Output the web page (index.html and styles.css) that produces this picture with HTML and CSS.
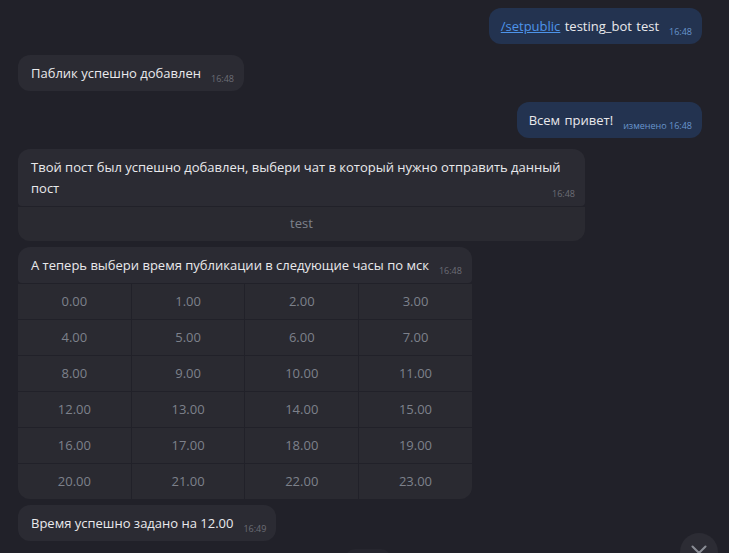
FILE: index.html
```html
<!DOCTYPE html>
<html lang="ru">
<head>
<meta charset="utf-8">
<link rel="stylesheet" href="styles.css">
</head>
<body>
<div class="chat">
  <div class="row out first">
    <div class="bubble out-b"><a class="link" href="#">/setpublic</a> testing_bot test<span class="time">16:48</span></div>
  </div>
  <div class="row in">
    <div class="bubble">Паблик успешно добавлен<span class="time">16:48</span></div>
  </div>
  <div class="row out">
    <div class="bubble out-b">Всем привет!<span class="time">изменено 16:48</span></div>
  </div>
  <div class="row in">
    <div class="group wide">
      <div class="bubble top">Твой пост был успешно добавлен, выбери чат в который нужно отправить данный пост<span class="time">16:48</span></div>
      <div class="kb kb1">
        <div class="key">test</div>
      </div>
    </div>
  </div>
  <div class="row in same">
    <div class="group">
      <div class="bubble top">А теперь выбери время публикации в следующие часы по мск<span class="time">16:48</span></div>
      <div class="kb kb4">
        <div class="key">0.00</div><div class="key">1.00</div><div class="key">2.00</div><div class="key">3.00</div>
        <div class="key">4.00</div><div class="key">5.00</div><div class="key">6.00</div><div class="key">7.00</div>
        <div class="key">8.00</div><div class="key">9.00</div><div class="key">10.00</div><div class="key">11.00</div>
        <div class="key">12.00</div><div class="key">13.00</div><div class="key">14.00</div><div class="key">15.00</div>
        <div class="key">16.00</div><div class="key">17.00</div><div class="key">18.00</div><div class="key">19.00</div>
        <div class="key">20.00</div><div class="key">21.00</div><div class="key">22.00</div><div class="key">23.00</div>
      </div>
    </div>
  </div>
  <div class="row in same">
    <div class="bubble">Время успешно задано на 12.00<span class="time">16:49</span></div>
  </div>
</div>
<div class="pill"></div>
<button class="down" aria-label="down">
  <svg width="16" height="10" viewBox="0 0 16 10"><path d="M1.5 1.5 L8 8 L14.5 1.5" fill="none" stroke="#8b8e96" stroke-width="2" stroke-linecap="round" stroke-linejoin="round"/></svg>
</button>
</body>
</html>
```
FILE: styles.css
```css
html, body {
  margin: 0;
  padding: 0;
  background: #212129;
  height: 100%;
  overflow: hidden;
}
body {
  font-family: "Open Sans", "Liberation Sans", sans-serif;
  font-size: 13px;
  color: #e9e9ec;
  position: relative;
}
.chat {
  display: flex;
  flex-direction: column;
  padding: 8px 27px 0 18px;
}
.row {
  display: flex;
  margin-top: 11px;
}
.row.first { margin-top: 0; }
.row.same { margin-top: 6px; }
.row.out { justify-content: flex-end; }
.bubble {
  display: flow-root;
  background: #2b2b33;
  border-radius: 12px;
  padding: 8px 10px 7px 13px;
  line-height: 21px;
  max-width: 544px;
}
.out-b {
  background: #233350;
  padding-left: 12px;
  word-spacing: 1px;
}
.link {
  color: #4d94ea;
  text-decoration: underline;
}
.time {
  float: right;
  font-size: 9px;
  line-height: 10px;
  margin-top: 11px;
  margin-left: 10px;
  color: #6b6d76;
  word-spacing: 0;
}
.out-b .time { color: #6895cd; }
.group {
  display: flex;
  flex-direction: column;
  gap: 1px;
}
.group .bubble.top {
  border-radius: 12px 12px 4px 4px;
}
.kb {
  display: grid;
  gap: 1px;
  border-radius: 0 0 12px 12px;
  overflow: hidden;
}
.kb1 { grid-template-columns: 1fr; }
.kb4 { grid-template-columns: repeat(4, 1fr); }
.key {
  background: #2a2a31;
  color: #7d818b;
  text-align: center;
  height: 35px;
  line-height: 35px;
}
.kb1 .key { height: 34px; line-height: 33px; }
.pill {
  position: absolute;
  left: 345px;
  top: 549px;
  width: 46px;
  height: 20px;
  border-radius: 10px;
  background: #26262e;
}
.down {
  position: absolute;
  left: 680px;
  top: 533px;
  width: 38px;
  height: 38px;
  border-radius: 50%;
  border: none;
  background: #2c2c34;
  padding: 0;
  display: flex;
  align-items: flex-start;
  justify-content: center;
  padding-top: 12px;
}
```
